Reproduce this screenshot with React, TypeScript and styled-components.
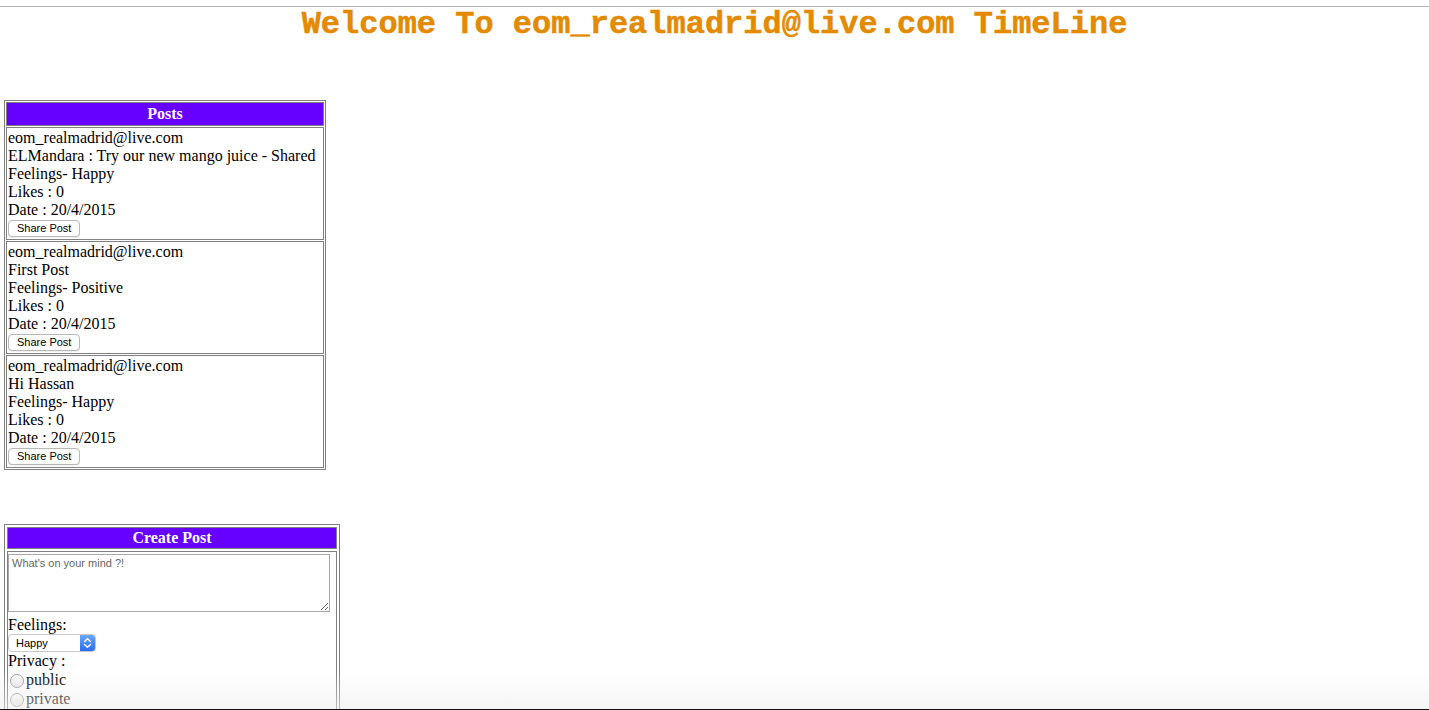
import { useState } from "react";
import styled, { createGlobalStyle } from "styled-components";

type Post = {
  author: string;
  text: string;
  feeling: string;
  likes: number;
  date: string;
};

const posts: Post[] = [
  {
    author: "eom_realmadrid@live.com",
    text: "ELMandara : Try our new mango juice - Shared",
    feeling: "Happy",
    likes: 0,
    date: "20/4/2015",
  },
  {
    author: "eom_realmadrid@live.com",
    text: "First Post",
    feeling: "Positive",
    likes: 0,
    date: "20/4/2015",
  },
  {
    author: "eom_realmadrid@live.com",
    text: "Hi Hassan",
    feeling: "Happy",
    likes: 0,
    date: "20/4/2015",
  },
];

export default function App() {
  const [privacy, setPrivacy] = useState<"public" | "private" | "">("");
  const [status, setStatus] = useState("");

  return (
    <>
      <GlobalStyle />
      <Page>
        <TopRule />
        <Title>Welcome To eom_realmadrid@live.com TimeLine</Title>

        {/* posts list */}
        <PostsTable>
          <tbody>
            <tr>
              <HeadCell>Posts</HeadCell>
            </tr>
            {posts.map((p, i) => (
              <tr key={i}>
                <PostCell>
                  <Line>{p.author}</Line>
                  <Line>{p.text}</Line>
                  <Line>Feelings- {p.feeling}</Line>
                  <Line>Likes : {p.likes}</Line>
                  <Line>Date : {p.date}</Line>
                  <ShareButton>Share Post</ShareButton>
                </PostCell>
              </tr>
            ))}
          </tbody>
        </PostsTable>

        {/* create post form */}
        <CreateTable>
          <tbody>
            <tr>
              <HeadCell $tight>Create Post</HeadCell>
            </tr>
            <tr>
              <PostCell $flush>
                <StatusArea
                  placeholder="What's on your mind ?!"
                  value={status}
                  onChange={(e) => setStatus(e.target.value)}
                />
                <Line>Feelings:</Line>
                <FakeSelect>
                  <SelectValue>Happy</SelectValue>
                  <SelectArrows>
                    <svg width="9" height="12" viewBox="0 0 9 12">
                      <path
                        d="M1.5 4.5 L4.5 1.8 L7.5 4.5 M1.5 7.5 L4.5 10.2 L7.5 7.5"
                        fill="none"
                        stroke="#fff"
                        strokeWidth="1.4"
                        strokeLinecap="round"
                        strokeLinejoin="round"
                      />
                    </svg>
                  </SelectArrows>
                </FakeSelect>
                <Line>Privacy :</Line>
                <RadioRow>
                  <Radio
                    type="radio"
                    name="privacy"
                    checked={privacy === "public"}
                    onChange={() => setPrivacy("public")}
                  />
                  public
                </RadioRow>
                <RadioRow>
                  <Radio
                    type="radio"
                    name="privacy"
                    checked={privacy === "private"}
                    onChange={() => setPrivacy("private")}
                  />
                  private
                </RadioRow>
                <ShareButton>Post</ShareButton>
              </PostCell>
            </tr>
          </tbody>
        </CreateTable>
      </Page>
      <BottomShade />
    </>
  );
}

/* ============ styled-components ============ */

const GlobalStyle = createGlobalStyle`
  html, body {
    margin: 0;
    padding: 0;
    background: #fff;
    overflow: hidden;
  }
  body {
    font-family: "Liberation Serif", "Times New Roman", serif;
    font-size: 16px;
    color: #000;
  }
`;

const Page = styled.div`
  padding: 6px 0 40px 4px;
`;

const TopRule = styled.div`
  height: 1px;
  margin-left: -4px;
  background: #b3b3b3;
`;

const Title = styled.h1`
  margin: 0;
  font-family: "Liberation Mono", "Courier New", monospace;
  font-size: 32px;
  line-height: 36px;
  font-weight: bold;
  color: #e38a00;
  text-align: center;
  padding-right: 4px;
  -webkit-text-stroke: 0.5px #e38a00;
`;

const PostsTable = styled.table`
  width: 322px;
  margin-top: 57px;
  border: 1px solid #808080;
  border-spacing: 1px;
  border-collapse: separate;
`;

const CreateTable = styled.table`
  width: 336px;
  margin-top: 54px;
  border: 1px solid #808080;
  border-spacing: 2px;
  border-collapse: separate;
`;

const HeadCell = styled.th<{ $tight?: boolean }>`
  background: #6600ff;
  color: #fff;
  font-weight: bold;
  font-size: 16px;
  line-height: 18px;
  padding: ${({ $tight }) => ($tight ? "1px" : "2px 1px")};
  border: 1px solid #808080;
  text-align: center;
`;

const PostCell = styled.td<{ $flush?: boolean }>`
  border: 1px solid #808080;
  padding: ${({ $flush }) => ($flush ? "1px 1px 1px 0" : "1px")};
  text-align: left;
  vertical-align: top;
`;

const Line = styled.div`
  line-height: 18px;
  white-space: nowrap;
`;

const ShareButton = styled.button`
  display: block;
  height: 17px;
  margin: 1px 0 1px 0;
  padding: 0 8px;
  font-family: "Liberation Sans", Arial, sans-serif;
  font-size: 11px;
  line-height: 15px;
  color: #000;
  background: #fff;
  border: 1px solid #b9b9b9;
  border-radius: 4px;
  box-shadow: 0 0.5px 0.5px rgba(0, 0, 0, 0.12);
`;

const StatusArea = styled.textarea`
  display: block;
  box-sizing: border-box;
  width: 322px;
  height: 58px;
  margin: 1px 0 4px 0;
  padding: 2px 3px;
  resize: both;
  font-family: "Liberation Sans", Arial, sans-serif;
  font-size: 11px;
  border: 1px solid #a9a9a9;
  outline: none;

  &::placeholder {
    color: #666;
  }
`;

const FakeSelect = styled.div`
  display: flex;
  width: 88px;
  height: 18px;
  box-sizing: border-box;
  border: 1px solid #c8c8c8;
  border-radius: 4px;
  overflow: hidden;
  background: #fff;
  font-family: "Liberation Sans", Arial, sans-serif;
  font-size: 11px;
`;

const SelectValue = styled.span`
  flex: 1;
  padding-left: 7px;
  line-height: 16px;
`;

const SelectArrows = styled.span`
  width: 15px;
  display: flex;
  align-items: center;
  justify-content: center;
  background: linear-gradient(#6aa7fb, #2b6ef2);
`;

const RadioRow = styled.label`
  display: flex;
  align-items: center;
  height: 19px;
  line-height: 18px;
`;

const Radio = styled.input`
  appearance: none;
  width: 14px;
  height: 14px;
  margin: 2px 2px 0 2px;
  border-radius: 50%;
  border: 1px solid #9d9d9d;
  background: linear-gradient(#fff, #e6e6e6);
  box-sizing: border-box;

  &:checked {
    background: radial-gradient(circle, #fff 0 2px, #2b6ef2 3px);
    border-color: #2b6ef2;
  }
`;

const BottomShade = styled.div`
  position: fixed;
  left: 0;
  right: 0;
  bottom: 0;
  height: 38px;
  pointer-events: none;
  background: linear-gradient(rgba(240, 240, 240, 0), rgba(236, 236, 236, 0.55));
  border-bottom: 1px solid #111;
`;
